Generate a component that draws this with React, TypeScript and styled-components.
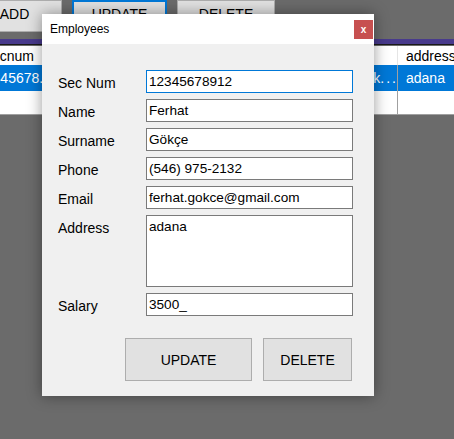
import React, { FC } from 'react';
import styled, { createGlobalStyle } from 'styled-components';

const Global = createGlobalStyle`
html, body {margin: 0; padding: 0; background: #6b6b6b;}
* {box-sizing: border-box;}
`

const Screen = styled.div`
position: relative;
width: 454px;
height: 439px;
overflow: hidden;
background: #6b6b6b;
font-family: "Liberation Sans", Arial, sans-serif;
color: #000;`

// Окно приложения за диалогом
const Toolbar = styled.div`
display: flex;
gap: 10px;
height: 32px;
margin-left: -33px;`

const ToolButton = styled.div<{ $w: number; $focus?: boolean }>`
width: ${p => p.$w}px;
height: 32px;
display: flex;
align-items: center;
justify-content: center;
padding-bottom: 4px;
background: #e1e1e1;
border: ${p => p.$focus ? '2px solid #0078d7' : '1px solid #adadad'};
font-size: 14px;`

const Band = styled.div`
margin-top: 7px;
height: 6px;
background: #483a8c;
border-bottom: 1px solid #1a1a1a;`

const Table = styled.div`
margin-top: 1px;
margin-left: -24px;
display: grid;
grid-template-columns: 120px 80px 70px 72px 80px 160px;
background: #fff;
border-bottom: 1px solid #a0a0a0;
font-size: 14px;`

const Cell = styled.div<{ $h: number; $sel?: boolean; $pad?: number; $head?: boolean }>`
height: ${p => p.$h}px;
display: flex;
align-items: center;
padding-left: ${p => p.$pad ?? 8}px;
white-space: nowrap;
overflow: hidden;
background: ${p => p.$sel ? '#0078d7' : '#fff'};
color: ${p => p.$sel ? '#fff' : '#000'};
border-right: 1px solid ${p => p.$head ? '#e5e5e5' : '#a0a0a0'};`

const Dots = styled.span`
letter-spacing: 2px;`

// Диалог
const Dialog = styled.div`
position: absolute;
left: 42px;
top: 14px;
width: 332px;
height: 382px;
background: #f0f0f0;
box-shadow: 0 0 14px rgba(0, 0, 0, 0.4);
display: flex;
flex-direction: column;`

const TitleBar = styled.div`
height: 30px;
background: #fff;
display: flex;
align-items: center;
justify-content: space-between;
padding-left: 8px;
padding-right: 1px;
font-size: 12px;`

const CloseBtn = styled.div`
width: 19px;
height: 19px;
background: #c75050;
color: #fff;
font-size: 10px;
font-weight: bold;
display: flex;
align-items: center;
justify-content: center;
margin-top: 1px;`

const Form = styled.div`
display: grid;
grid-template-columns: 88px 207px;
row-gap: 6px;
padding: 26px 0 0 16px;`

const Label = styled.div<{ $top?: boolean }>`
font-size: 14px;
align-self: ${p => p.$top ? 'start' : 'center'};
padding-top: ${p => p.$top ? '5px' : '2px'};`

const Field = styled.div<{ $focus?: boolean; $h?: number }>`
height: ${p => p.$h ?? 23}px;
background: #fff;
border: 1px solid ${p => p.$focus ? '#0078d7' : '#7a7a7a'};
padding: ${p => p.$h ? '3px' : '0'} 2px 0;
display: flex;
align-items: ${p => p.$h ? 'flex-start' : 'center'};
font-size: 13.6px;`

const Actions = styled.div`
display: flex;
justify-content: flex-end;
gap: 11px;
padding: 22px 22px 0 0;`

const ActionButton = styled.div<{ $w: number }>`
width: ${p => p.$w}px;
height: 43px;
background: #e1e1e1;
border: 1px solid #adadad;
display: flex;
align-items: center;
justify-content: center;
font-size: 14px;`

const fields = [
  { label: 'Sec Num', value: '12345678912', focus: true },
  { label: 'Name', value: 'Ferhat' },
  { label: 'Surname', value: 'Gökçe' },
  { label: 'Phone', value: '(546) 975-2132' },
  { label: 'Email', value: 'ferhat.gokce@gmail.com' },
  { label: 'Address', value: 'adana', h: 72 },
  { label: 'Salary', value: '3500_' },
];

const App: FC = () => {
  return (
    <Screen>
      <Global />
      <Toolbar>
        <ToolButton $w={95}>ADD</ToolButton>
        <ToolButton $w={95} $focus>UPDATE</ToolButton>
        <ToolButton $w={98}>DELETE</ToolButton>
      </Toolbar>
      <Band />
      <Table>
        <Cell $h={19} $head $pad={9}>secnum</Cell>
        <Cell $h={19} $head>name</Cell>
        <Cell $h={19} $head>surname</Cell>
        <Cell $h={19} $head>phone</Cell>
        <Cell $h={19} $head></Cell>
        <Cell $h={19} $head>address</Cell>
        <Cell $h={26} $sel $pad={1}>12345678...</Cell>
        <Cell $h={26} $sel>Ferhat</Cell>
        <Cell $h={26} $sel>Gökçe</Cell>
        <Cell $h={26} $sel>(546) 975-2132</Cell>
        <Cell $h={26} $sel $pad={0}>ferhat.gok<Dots>...</Dots></Cell>
        <Cell $h={26} $sel>adana</Cell>
        <Cell $h={23} />
        <Cell $h={23} />
        <Cell $h={23} />
        <Cell $h={23} />
        <Cell $h={23} />
        <Cell $h={23} />
      </Table>

      <Dialog>
        <TitleBar>
          Employees
          <CloseBtn>x</CloseBtn>
        </TitleBar>
        <Form>
          {fields.map(f => (
            <React.Fragment key={f.label}>
              <Label $top={!!f.h}>{f.label}</Label>
              <Field $focus={f.focus} $h={f.h}>{f.value}</Field>
            </React.Fragment>
          ))}
        </Form>
        <Actions>
          <ActionButton $w={127}>UPDATE</ActionButton>
          <ActionButton $w={89}>DELETE</ActionButton>
        </Actions>
      </Dialog>
    </Screen>
  );
}

export default App;
